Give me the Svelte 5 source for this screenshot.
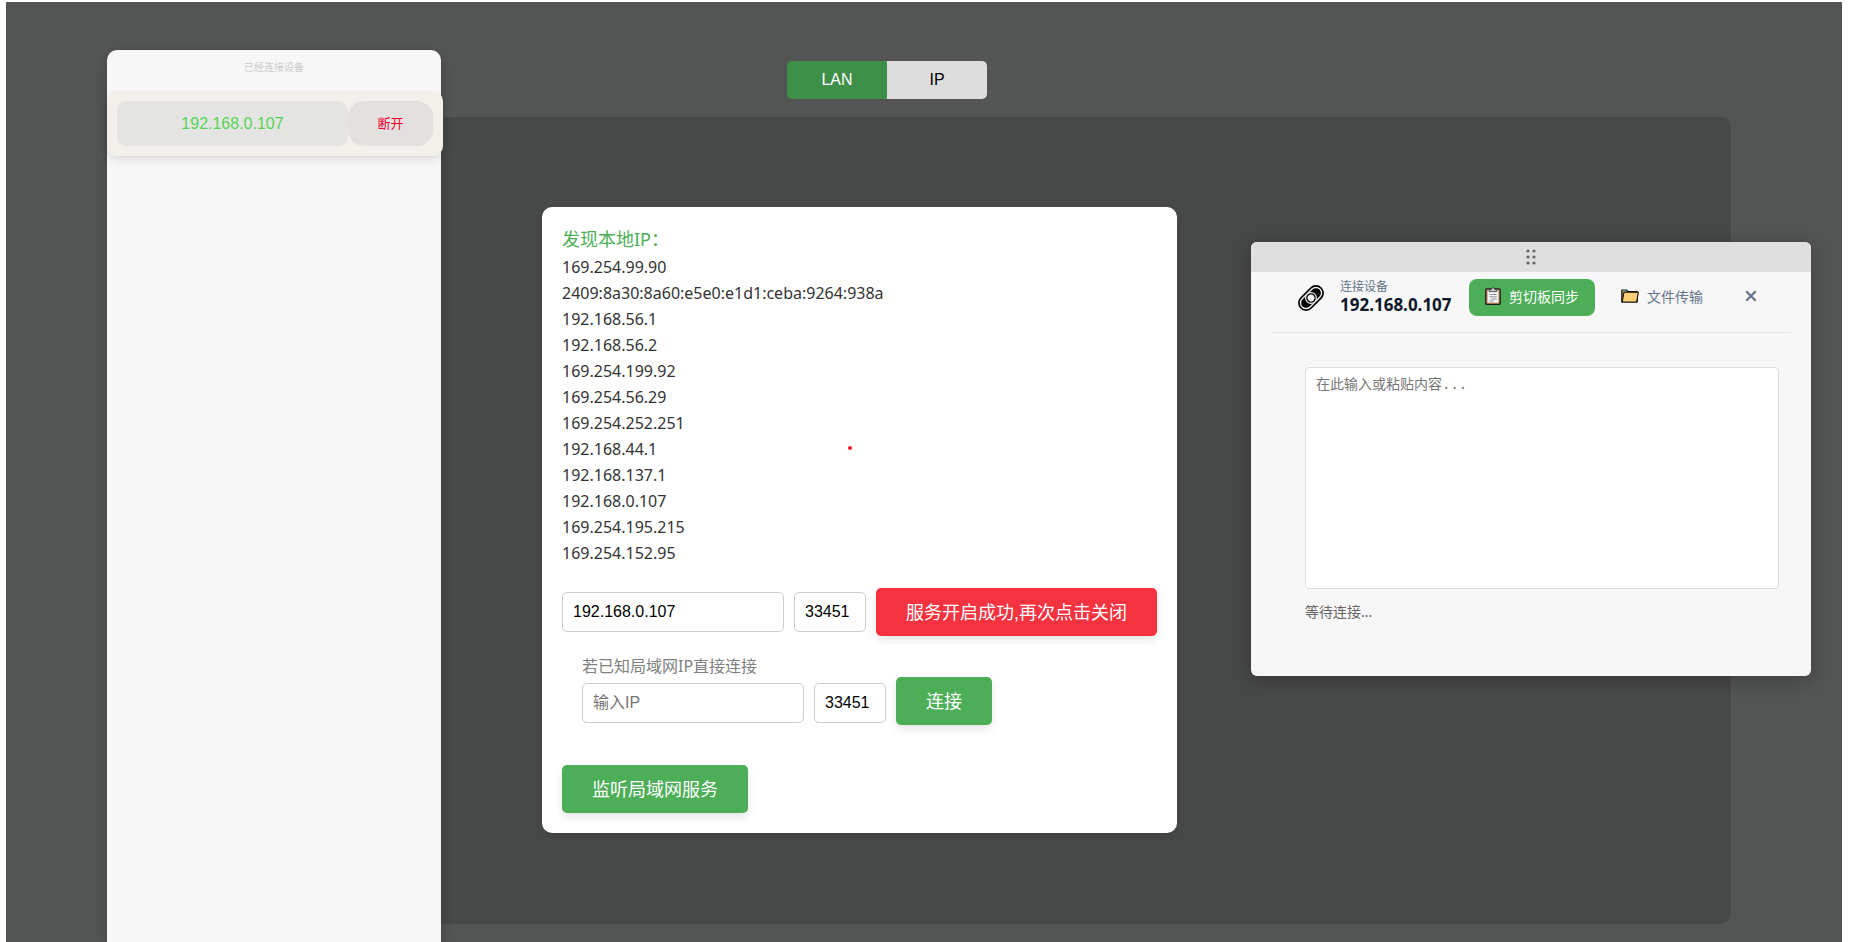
<script>
  const addresses = [
    '169.254.99.90',
    '2409:8a30:8a60:e5e0:e1d1:ceba:9264:938a',
    '192.168.56.1',
    '192.168.56.2',
    '169.254.199.92',
    '169.254.56.29',
    '169.254.252.251',
    '192.168.44.1',
    '192.168.137.1',
    '192.168.0.107',
    '169.254.195.215',
    '169.254.152.95'
  ];
  let localIp = $state('192.168.0.107');
  let localPort = $state('33451');
  let remoteIp = $state('');
  let remotePort = $state('33451');
  let clip = $state('');
</script>

<div class="app">
  <aside class="sidebar">
    <h2>已经连接设备</h2>
    <div class="device">
      <button class="device-ip">192.168.0.107</button>
      <button class="drop">断开</button>
    </div>
  </aside>

  <main>
    <nav class="modes">
      <button class="active">LAN</button>
      <button>IP</button>
    </nav>
    <section class="stage">
      <div class="card">
        <h1>发现本地IP：</h1>
        <ul>
          {#each addresses as address}
            <li>{address}</li>
          {/each}
        </ul>
        <div class="row">
          <input class="ip" aria-label="IP" bind:value={localIp} />
          <input class="port" aria-label="端口" bind:value={localPort} />
          <button class="action stop">服务开启成功,再次点击关闭</button>
        </div>
        <div class="direct">
          <label for="remote-ip">若已知局域网IP直接连接</label>
          <div class="row">
            <input id="remote-ip" class="ip" placeholder="输入IP" bind:value={remoteIp} />
            <input class="port" aria-label="端口" bind:value={remotePort} />
            <button class="action">连接</button>
          </div>
        </div>
        <button class="action">监听局域网服务</button>
        <span class="dot"></span>
      </div>
    </section>
  </main>

  <section class="window">
    <div class="grip">
      <svg width="12" height="18" viewBox="0 0 12 18" fill="#666">
        <circle cx="3" cy="3" r="1.6" /><circle cx="9" cy="3" r="1.6" />
        <circle cx="3" cy="9" r="1.6" /><circle cx="9" cy="9" r="1.6" />
        <circle cx="3" cy="15" r="1.6" /><circle cx="9" cy="15" r="1.6" />
      </svg>
    </div>
    <header>
      <svg class="link" width="28" height="28" viewBox="0 0 28 28" fill="none">
        <g transform="rotate(-45 14 14)">
          <rect x="-1" y="6" width="30" height="16" rx="8" fill="#000" />
          <rect x="1.4" y="8.4" width="25.2" height="11.2" rx="5.6" stroke="#eee" stroke-width="1.4" />
          <circle cx="14" cy="14" r="5.4" fill="#000" stroke="#eee" stroke-width="1.2" />
          <circle cx="14" cy="14" r="3.4" fill="#f7f7f7" />
        </g>
      </svg>
      <div class="peer">
        <span>连接设备</span>
        <strong>192.168.0.107</strong>
      </div>
      <button class="tab active">
        <svg width="16" height="18" viewBox="0 0 16 18">
          <rect x="0.8" y="1.8" width="14.4" height="15.6" rx="1" fill="#c98d63" stroke="#1c1c1c" stroke-width="1.3" />
          <rect x="2.6" y="3.6" width="10.8" height="12" fill="#f2f4f6" />
          <path d="M4.3 4.6V2.6h1.9a1.8 1.8 0 0 1 3.6 0h1.9v2z" fill="#ccc" stroke="#333" stroke-width="0.8" />
          <path d="M4.4 7.5h7.2M4.4 9.8h7.2M6 12h5.6M4.4 14h4.2" stroke="#8a8f94" stroke-width="1" />
        </svg>
        剪切板同步
      </button>
      <button class="tab">
        <svg width="18" height="14" viewBox="0 0 18 14">
          <path d="M0.8 13V1h4.7l1.3 1.5h9.4V13z" fill="#d9962f" stroke="#111" stroke-width="1.2" stroke-linejoin="round" />
          <path d="M1.5 1h3.4l.8 1.2H1.5z" fill="#2c8fc7" />
          <path d="M2.8 4.1c0-.5.3-.8.8-.8h13.7l-1.7 9.7H1.2z" fill="#ffd078" stroke="#111" stroke-width="1.1" stroke-linejoin="round" />
        </svg>
        文件传输
      </button>
      <button class="close" aria-label="关闭">
        <svg width="12" height="12" viewBox="0 0 12 12" stroke="#64748b" stroke-width="2.2">
          <path d="M1.3 1.3l9.4 9.4M10.7 1.3l-9.4 9.4" />
        </svg>
      </button>
    </header>
    <div class="body">
      <textarea aria-label="剪切板内容" placeholder="在此输入或粘贴内容..." bind:value={clip}></textarea>
      <p>等待连接...</p>
    </div>
  </section>
</div>

<style>
  :global(body) {
    background: #fff;
    font-family: 'Noto Sans', 'Noto Sans CJK SC', sans-serif;
  }
  * {
    box-sizing: border-box;
  }
  button,
  input {
    margin: 0;
    border: 0;
    font-family: 'Liberation Sans', 'Noto Sans CJK SC', sans-serif;
    font-size: 16px;
  }
  button {
    cursor: pointer;
    padding: 0;
  }
  h1,
  h2,
  p,
  ul {
    margin: 0;
    padding: 0;
    font-weight: 400;
  }
  .app {
    position: relative;
    display: flex;
    min-height: calc(100vh - 2px);
    margin: 2px 8px 0 6px;
    padding-left: 101px;
    padding-right: 111px;
    background: #535554;
    overflow: hidden;
  }
  .sidebar {
    position: relative;
    z-index: 1;
    flex: 0 0 334px;
    margin-top: 48px;
    border-radius: 10px 10px 0 0;
    background: #f7f7f7;
    box-shadow: 0 4px 12px rgba(0, 0, 0, 0.2);
  }
  .sidebar h2 {
    padding: 9px 0 16px;
    color: #ccc;
    font-size: 10px;
    line-height: 16px;
    text-align: center;
  }
  .device {
    display: flex;
    margin-right: -2px;
    padding: 10px;
    border-radius: 10px;
    background: #f3f0eb;
    box-shadow: 0 4px 8px rgba(0, 0, 0, 0.1);
  }
  .device-ip {
    flex: 1;
    height: 45px;
    border-radius: 10px;
    background: #e4e5e3;
    color: #55d555;
  }
  .drop {
    width: 85px;
    padding-bottom: 2px;
    border-radius: 16px;
    background: #e5e0e0;
    color: #f0002c;
    font-size: 13px;
  }
  main {
    flex: 1;
    display: flex;
    flex-direction: column;
    align-items: flex-start;
    min-width: 0;
    padding: 59px 0 18px;
  }
  .modes {
    display: flex;
    margin: 0 0 18px 346px;
    border-radius: 5px;
    overflow: hidden;
  }
  .modes button {
    width: 100px;
    height: 38px;
    background: #ddd;
    color: #000;
  }
  .modes .active {
    background: #3e8f47;
    color: #fff;
  }
  .stage {
    flex: 1;
    align-self: stretch;
    padding: 90px 101px 80px;
    border-radius: 0 10px 10px 0;
    background: #474948;
  }
  .card {
    position: relative;
    width: max-content;
    padding: 20px;
    border-radius: 10px;
    background: #fff;
    color: #333;
    box-shadow: 0 4px 8px rgba(0, 0, 0, 0.1);
  }
  .card h1 {
    margin-bottom: 2px;
    color: #4cae57;
    font-size: 18px;
    line-height: 25px;
  }
  ul {
    list-style: none;
    margin-bottom: 22px;
    font-size: 16px;
    line-height: 26px;
  }
  .row {
    display: flex;
    align-items: center;
    gap: 10px;
  }
  input {
    height: 40px;
    padding: 0 10px;
    border: 1px solid #ccc;
    border-radius: 5px;
    background: #fff;
    color: #000;
  }
  input::placeholder,
  textarea::placeholder {
    color: #757575;
    opacity: 1;
  }
  .ip {
    width: 222px;
  }
  .port {
    width: 72px;
  }
  .action {
    display: block;
    height: 48px;
    padding: 0 30px 2px;
    border-radius: 5px;
    background: #4cae57;
    color: #fff;
    font-size: 18px;
    box-shadow: 0 4px 8px rgba(0, 0, 0, 0.1);
  }
  .stop {
    background: #f53340;
  }
  .direct {
    padding: 20px 20px 40px;
  }
  .direct label {
    display: block;
    color: #808080;
    font-size: 16px;
    line-height: 21px;
  }
  .direct input {
    margin-top: 4px;
  }
  .dot {
    position: absolute;
    left: 306px;
    top: 239px;
    width: 4px;
    height: 4px;
    border-radius: 50%;
    background: #ed1c24;
  }
  .window {
    position: absolute;
    z-index: 2;
    top: 240px;
    right: 31px;
    width: 560px;
    border-radius: 6px;
    background: #f7f7f7;
    box-shadow: 0 4px 20px rgba(0, 0, 0, 0.25);
    overflow: hidden;
  }
  .grip {
    display: flex;
    align-items: center;
    justify-content: center;
    height: 30px;
    background: #dfdfdf;
  }
  header {
    display: flex;
    align-items: center;
    margin: 0 20px;
    padding: 6px 30px 16px 26px;
    border-bottom: 1px solid #e2e8f0;
  }
  .link {
    margin: 2px 15px 0 0;
  }
  .peer {
    display: flex;
    flex-direction: column;
    flex: 1;
    padding-bottom: 2px;
    color: #64748b;
    font-size: 12px;
    line-height: 18px;
  }
  .peer strong {
    color: #0f172a;
    font-size: 17px;
    font-weight: 700;
    line-height: 18px;
  }
  .tab {
    display: flex;
    align-items: center;
    gap: 8px;
    height: 37px;
    padding: 0 16px 2px;
    border-radius: 8px;
    background: none;
    color: #64748b;
    font-size: 14px;
  }
  .tab.active {
    margin-right: 10px;
    background: #4cae57;
    color: #fff;
  }
  .close {
    display: flex;
    margin-left: 26px;
    padding: 0 4px 2px 0;
    background: none;
  }
  .body {
    padding: 34px 32px 54px 54px;
  }
  textarea {
    display: block;
    width: 100%;
    height: 222px;
    padding: 9px 10px;
    border: 1px solid #ddd;
    border-radius: 4px;
    background: #fff;
    font-family: 'Liberation Mono', 'Noto Sans CJK SC', monospace;
    font-size: 14px;
    line-height: 16px;
    resize: none;
  }
  .body p {
    margin-top: 13px;
    color: #666;
    font-size: 14px;
    line-height: 20px;
  }
</style>
